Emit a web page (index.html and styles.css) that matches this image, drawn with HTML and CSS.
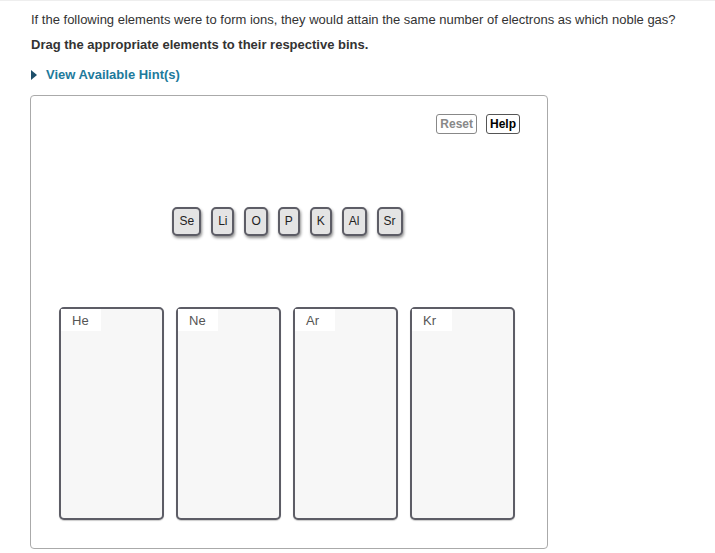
FILE: index.html
```html
<!DOCTYPE html>
<html>
<head>
<meta charset="utf-8">
<link rel="stylesheet" href="styles.css">
</head>
<body>
<div class="page">
  <p class="q">If the following elements were to form ions, they would attain the same number of electrons as which noble gas?</p>
  <p class="instr">Drag the appropriate elements to their respective bins.</p>
  <div class="hint"><span class="tri"></span><span>View Available Hint(s)</span></div>
  <div class="panel">
    <div class="tools">
      <button class="btn reset">Reset</button>
      <button class="btn help">Help</button>
    </div>
    <div class="tiles">
      <span class="tile">Se</span>
      <span class="tile">Li</span>
      <span class="tile">O</span>
      <span class="tile">P</span>
      <span class="tile">K</span>
      <span class="tile">Al</span>
      <span class="tile">Sr</span>
    </div>
    <div class="bins">
      <div class="bin"><span class="label">He</span></div>
      <div class="bin"><span class="label">Ne</span></div>
      <div class="bin"><span class="label">Ar</span></div>
      <div class="bin"><span class="label">Kr</span></div>
    </div>
  </div>
</div>
</body>
</html>
```
FILE: styles.css
```css
html, body {
  margin: 0;
  padding: 0;
  background: #fff;
}
body {
  font-family: "Liberation Sans", Arial, sans-serif;
  color: #333;
  border-top: 1px solid #eee;
}
.page {
  padding: 11px 0 0 31px;
}
.q {
  margin: 0;
  font-size: 13px;
  line-height: 16px;
}
.instr {
  margin: 9px 0 0;
  font-size: 13px;
  line-height: 16px;
  font-weight: bold;
}
.hint {
  margin-top: 14px;
  display: flex;
  align-items: center;
  font-size: 13px;
  line-height: 16px;
  font-weight: bold;
  color: #1d7a9c;
}
.tri {
  width: 0;
  height: 0;
  border-top: 5px solid transparent;
  border-bottom: 5px solid transparent;
  border-left: 6px solid #1d4f6a;
  margin-right: 9px;
}
.panel {
  margin-top: 12px;
  width: 518px;
  height: 454px;
  border: 1px solid #aaa;
  border-radius: 4px;
  margin-left: -1px;
  box-sizing: border-box;
  display: flex;
  flex-direction: column;
}
.tools {
  display: flex;
  justify-content: flex-end;
  gap: 9px;
  padding: 18px 27px 0 0;
}
.btn {
  font-family: "Liberation Sans", Arial, sans-serif;
  font-size: 12px;
  font-weight: bold;
  background: #fff;
  border-radius: 3px;
  padding: 1px 3px;
  height: 20px;
  line-height: 16px;
}
.reset {
  color: #888;
  border: 1px solid #888;
}
.help {
  color: #000;
  border: 1px solid #555;
}
.tiles {
  display: flex;
  justify-content: center;
  gap: 10px;
  margin-top: 73px;
  padding-right: 3px;
}
.tile {
  display: inline-block;
  background: #e4e4e4;
  border: 2px solid #5d5d66;
  border-radius: 5px;
  box-shadow: 1px 2px 3px rgba(0,0,0,0.45);
  font-size: 12px;
  line-height: 17px;
  padding: 4px 5px;
  color: #222;
  min-width: 8px;
  text-align: center;
}
.bins {
  display: flex;
  justify-content: center;
  gap: 12px;
  margin-top: 71px;
  padding-right: 4px;
}
.bin {
  width: 105px;
  height: 213px;
  box-sizing: border-box;
  background: #f7f7f7;
  border: 2px solid #5d5d66;
  border-radius: 5px;
  box-shadow: 0 1px 1px rgba(0,0,0,0.2);
}
.label {
  display: inline-block;
  width: 40px;
  height: 22px;
  background: #fff;
  font-size: 13px;
  line-height: 24px;
  color: #555;
  padding-left: 11px;
  box-sizing: border-box;
}
```
